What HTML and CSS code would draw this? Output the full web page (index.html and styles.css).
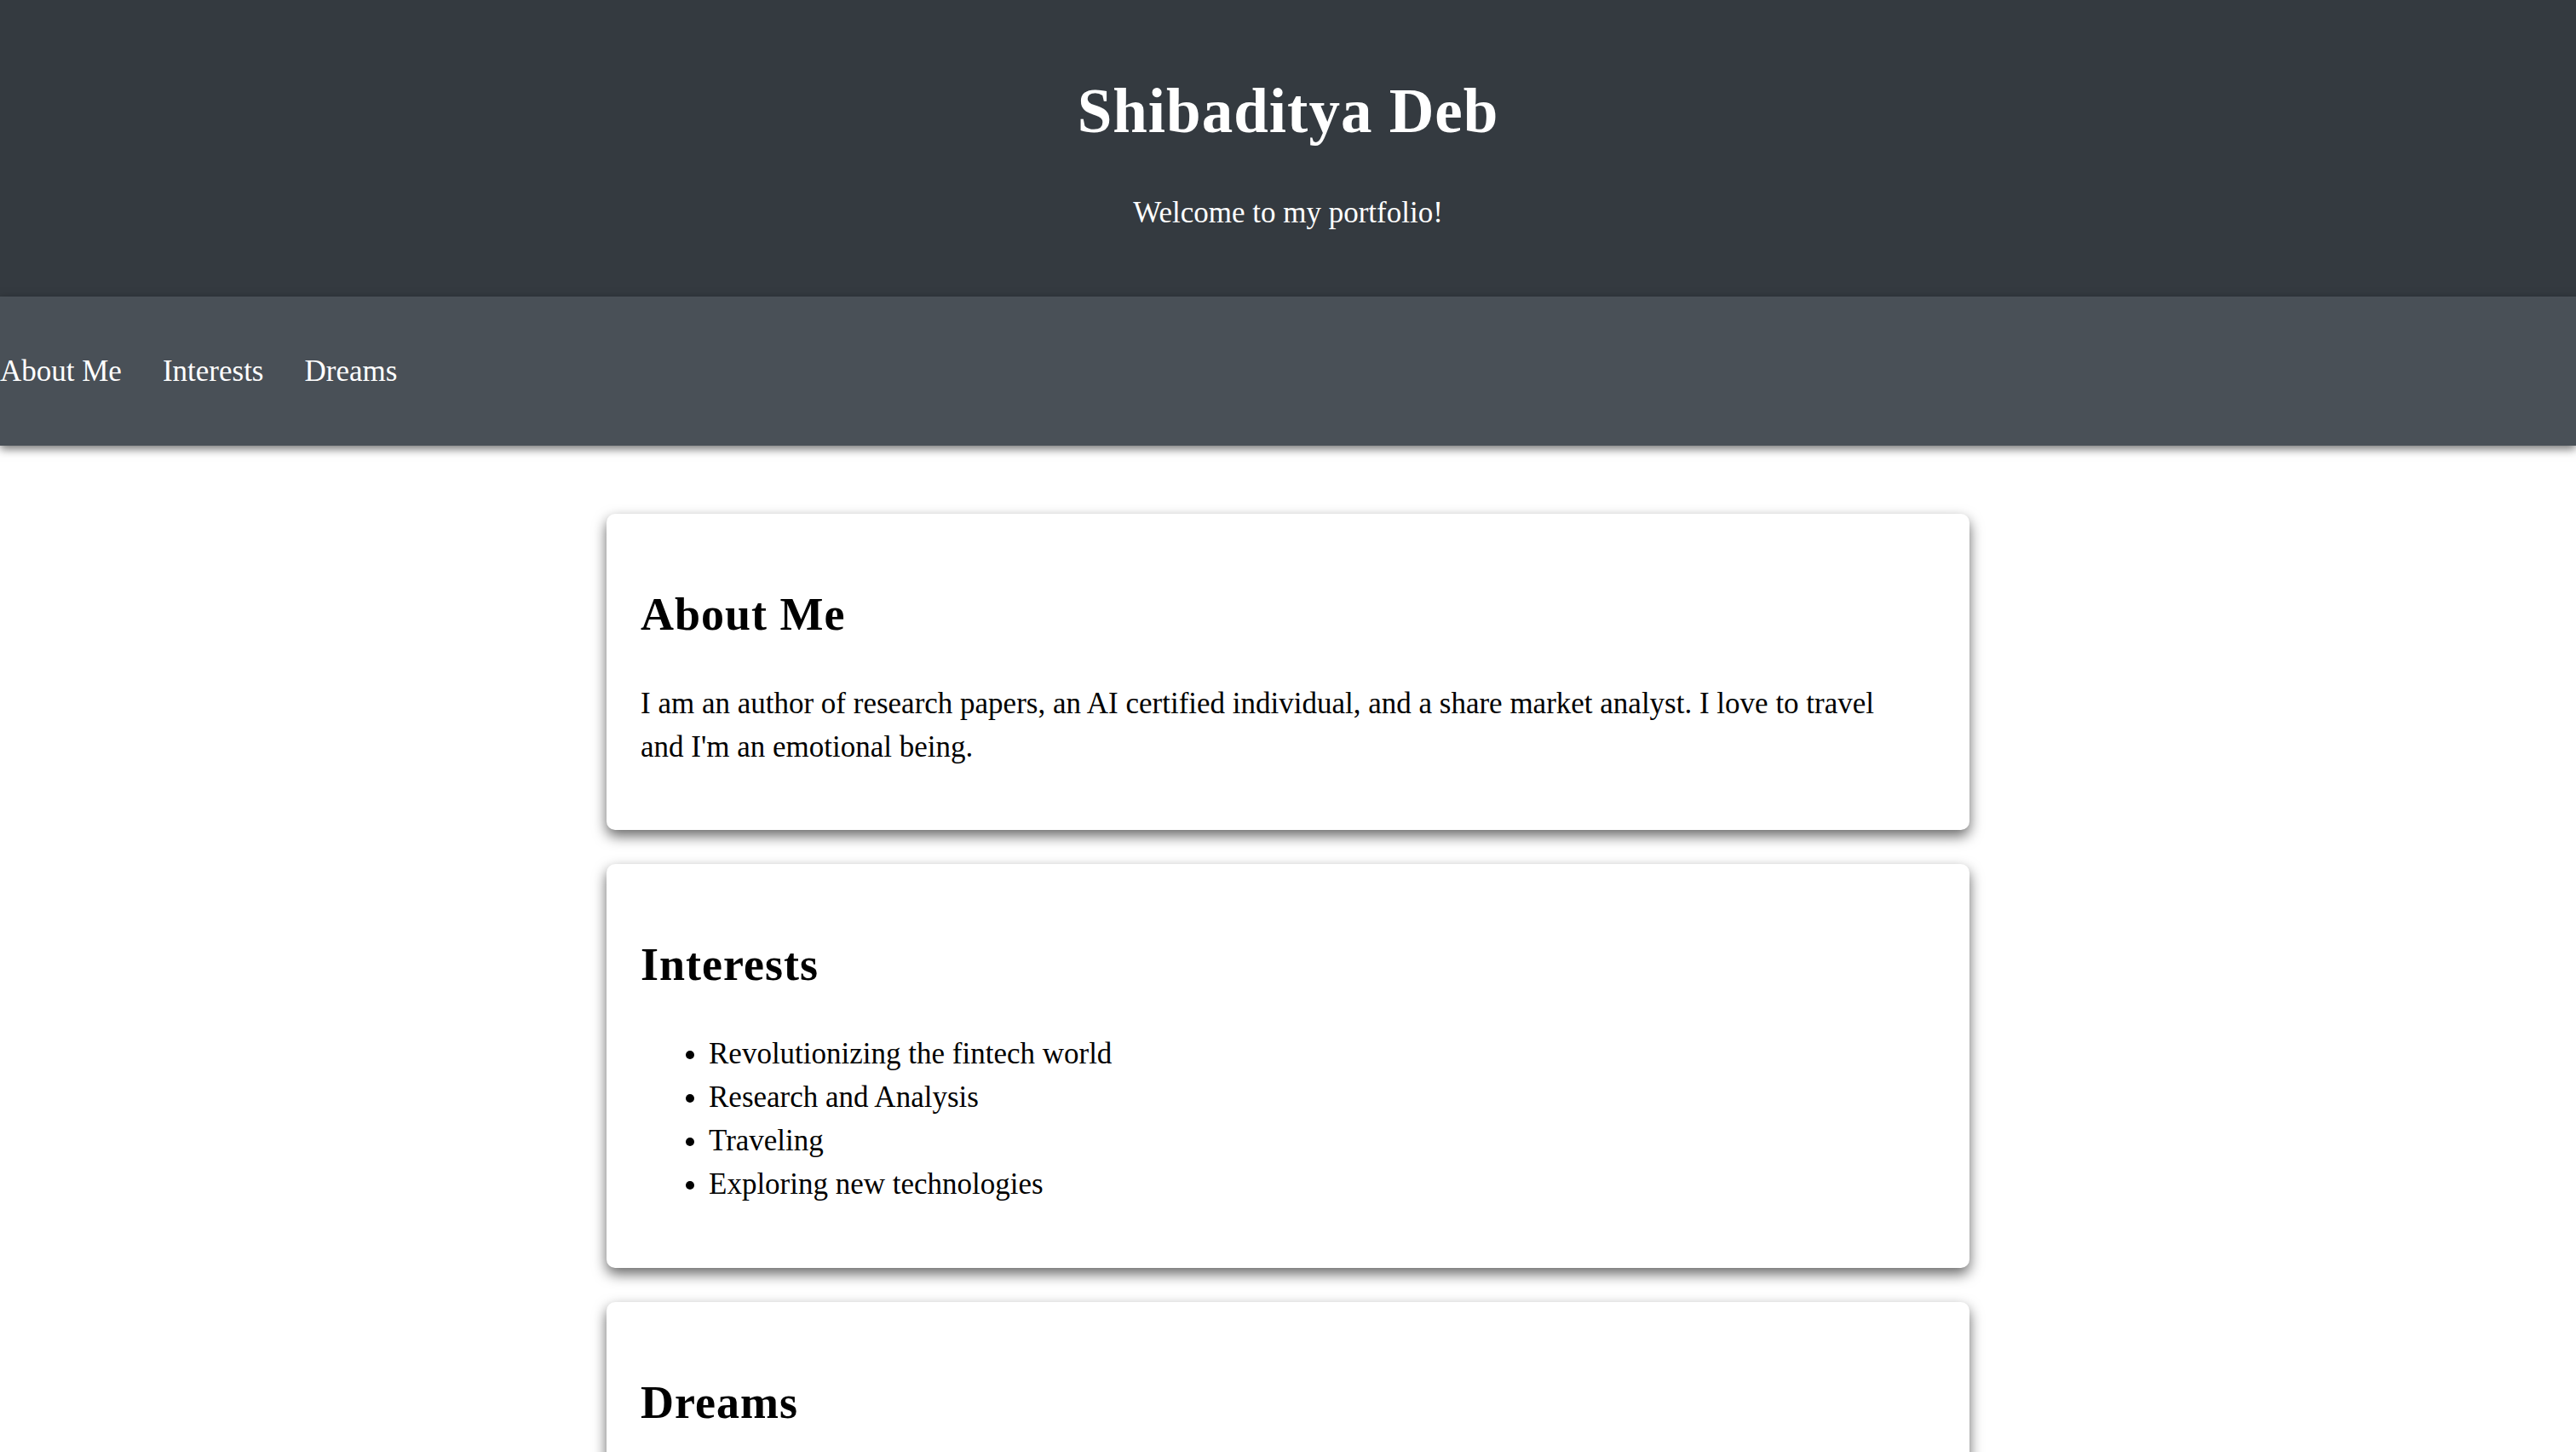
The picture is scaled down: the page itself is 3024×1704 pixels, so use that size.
FILE: index.html
```html
<!DOCTYPE html>
<html lang="en">
<head>
<meta charset="utf-8">
<title>Shibaditya Deb</title>
<link rel="stylesheet" href="styles.css">
</head>
<body>
<header class="site-header">
  <h1 class="site-title">Shibaditya Deb</h1>
  <p class="site-tagline">Welcome to my portfolio!</p>
</header>
<nav class="site-nav">
  <ul class="nav-list">
    <li><a class="nav-link" href="#about">About Me</a></li>
    <li><a class="nav-link" href="#interests">Interests</a></li>
    <li><a class="nav-link" href="#dreams">Dreams</a></li>
  </ul>
</nav>
<main class="content">
  <section class="card" id="about">
    <h2 class="card-title">About Me</h2>
    <p class="card-text">I am an author of research papers, an AI certified individual, and a share market analyst. I love to travel and I'm an emotional being.</p>
  </section>
  <section class="card" id="interests">
    <h2 class="card-title">Interests</h2>
    <ul class="card-list">
      <li>Revolutionizing the fintech world</li>
      <li>Research and Analysis</li>
      <li>Traveling</li>
      <li>Exploring new technologies</li>
    </ul>
  </section>
  <section class="card" id="dreams">
    <h2 class="card-title">Dreams</h2>
    <p class="card-text">To make a lasting impact in the world of finance and technology.</p>
  </section>
</main>
</body>
</html>
```

FILE: styles.css
```css
html, body {
  margin: 0;
  padding: 0;
}

body {
  font-family: "Liberation Serif", "Times New Roman", serif;
  font-size: 35px;
  line-height: 51.2px;
  color: #000;
  background: #fff;
}

.site-header {
  background: #343a40;
  color: #fff;
  text-align: center;
  padding: 40px 0;
}

.site-title {
  margin: 40px 0 0;
  font-size: 73px;
  line-height: 102.4px;
  letter-spacing: 1px;
  font-weight: bold;
}

.site-tagline {
  margin: 42px 0 32px;
}

.site-nav {
  background: #495057;
  padding: 30px 0;
  box-shadow: 0 4px 10px rgba(0, 0, 0, 0.55);
  position: relative;
}

.nav-list {
  list-style: none;
  margin: 32px 0;
  padding: 0;
  display: flex;
  gap: 48px;
}

.nav-link {
  color: #fff;
  text-decoration: none;
}

.content {
  width: 1600px;
  margin: 0 auto;
  padding: 80px 0 40px;
  display: flex;
  flex-direction: column;
  gap: 40px;
}

.card {
  background: #fff;
  border-radius: 10px;
  padding: 40px;
  box-shadow: 0 7px 16px rgba(0, 0, 0, 0.6);
}

.card-title {
  font-size: 54px;
  line-height: 76.8px;
  letter-spacing: 1px;
  margin: 40px 0;
}

.card-text {
  max-width: 1490px;
  margin: 40px 0 32px;
}

.card-list {
  margin: 40px 0 32px;
  padding-left: 80px;
}
```
